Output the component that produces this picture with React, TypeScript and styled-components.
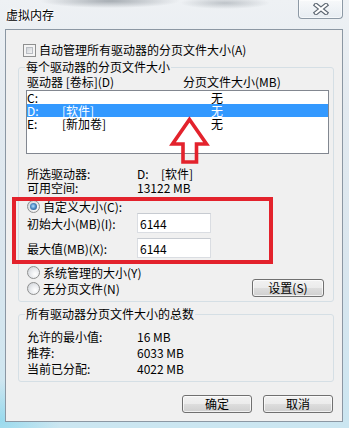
import React from "react";
import styled, { createGlobalStyle } from "styled-components";

const GlobalStyle = createGlobalStyle`
  html, body { margin: 0; padding: 0; }
  body {
    font-family: "Noto Sans CJK SC", "Liberation Sans", sans-serif;
    font-size: 12px;
    color: #000;
  }
  * { box-sizing: border-box; }
`;

const Window = styled.div`
  width: 349px;
  height: 428px;
  display: flex;
  flex-direction: column;
  padding: 0 6px 6px 5px;
  overflow: hidden;
  background:
    radial-gradient(ellipse 70px 7px at 110px 1px, rgba(80, 90, 100, 0.45), transparent),
    radial-gradient(ellipse 45px 6px at 225px 3px, rgba(80, 90, 100, 0.3), transparent),
    radial-gradient(ellipse 60px 40px at 0px 420px, rgba(120, 210, 235, 0.6), transparent),
    linear-gradient(180deg, #eef1f4 0%, #e3eaf0 25%, #dae6ee 60%, #cbe6f1 100%);
`;

const TitleBar = styled.div`
  height: 29px;
  display: flex;
  justify-content: space-between;
  align-items: flex-start;
`;

const Title = styled.div`
  padding: 7px 0 0 1px;
  font-size: 12px;
  line-height: 16px;
  text-shadow: 0 0 5px #fff, 0 0 3px #fff, 0 0 2px #fff;
`;

const CloseButton = styled.div`
  width: 45px;
  height: 19px;
  border: 1px solid #8d99a5;
  border-top: none;
  border-radius: 0 0 4px 4px;
  background: linear-gradient(180deg, rgba(255, 255, 255, 0.55), rgba(225, 233, 240, 0.5));
  box-shadow: inset 0 0 0 1px rgba(255, 255, 255, 0.6);
  display: flex;
  align-items: center;
  justify-content: center;
`;

const Client = styled.div`
  flex: 1;
  position: relative;
  background: #f0f0f0;
  border: 1px solid #8b97a3;
  display: flex;
  flex-direction: column;
`;

const CheckRow = styled.label`
  margin: 13px 0 0 17px;
  height: 14px;
  display: flex;
  align-items: center;
  gap: 3px;
  line-height: 14px;
`;

const CheckBox = styled.span`
  width: 13px;
  height: 13px;
  border: 1px solid #8e8f8f;
  background: #f4f4f4;
  padding: 2px;
  display: inline-flex;
  &::after {
    content: "";
    flex: 1;
    border: 1px solid #b9bdc3;
    background: linear-gradient(135deg, #cfd3d8, #f3f3f3);
  }
`;

const Group = styled.fieldset<{ $top: number }>`
  margin: ${(p) => p.$top}px 8px 0 12px;
  border: 1px solid #d5dfe5;
  border-radius: 3px;
  padding: 0 4px 4px 8px;
  min-width: 0;
`;

const Legend = styled.legend`
  padding: 0 1px;
  margin-left: -2px;
  line-height: 16px;
`;

const HeaderRow = styled.div`
  display: grid;
  grid-template-columns: 156px 1fr;
  height: 14px;
  line-height: 14px;
`;

const ListBox = styled.div`
  margin: 1px 0 0 -1px;
  height: 64px;
  border: 1px solid #828790;
  background: #fff;
  display: flex;
  flex-direction: column;
`;

const ListRow = styled.div<{ $selected?: boolean }>`
  display: grid;
  grid-template-columns: 35px 149px 1fr;
  height: 13px;
  line-height: 13px;
  background: ${(p) => (p.$selected ? "#3399ff" : "transparent")};
  color: ${(p) => (p.$selected ? "#fff" : "#000")};
`;

const InfoGrid = styled.div<{ $top: number; $line: number }>`
  margin-top: ${(p) => p.$top}px;
  display: grid;
  grid-template-columns: 110px 1fr;
  line-height: ${(p) => p.$line}px;
`;

const DriveLetter = styled.span`
  display: inline-block;
  width: 24px;
`;

const RadioRow = styled.label<{ $top: number; $h: number }>`
  margin-top: ${(p) => p.$top}px;
  height: ${(p) => p.$h}px;
  display: flex;
  align-items: center;
  gap: 3px;
`;

const Radio = styled.span<{ $checked?: boolean }>`
  width: 13px;
  height: 13px;
  border-radius: 50%;
  border: 1px solid #8e8f8f;
  background: radial-gradient(circle at 65% 65%, #ffffff 0%, #e9ebee 45%, #c9cdd2 100%);
  display: inline-flex;
  align-items: center;
  justify-content: center;
  &::after {
    content: "";
    width: 7px;
    height: 7px;
    border-radius: 50%;
    display: ${(p) => (p.$checked ? "block" : "none")};
    background: radial-gradient(circle at 45% 45%, #b5e0ff 0%, #4f8cc8 45%, #1d3f6b 100%);
  }
`;

const FieldRow = styled.div<{ $top: number }>`
  margin-top: ${(p) => p.$top}px;
  display: grid;
  grid-template-columns: 110px 74px;
  height: 20px;
  align-items: center;
`;

const TextBox = styled.input`
  width: 74px;
  height: 20px;
  border: 1px solid #dadde2;
  border-top-color: #c7cbd1;
  background: #fff;
  padding: 0 2px;
  font: inherit;
  line-height: 18px;
  color: #000;
  outline: none;
`;

const SplitRow = styled.div`
  height: 18px;
  display: flex;
  justify-content: space-between;
  align-items: center;
`;

const Button = styled.button<{ $w: number; $right?: number }>`
  width: ${(p) => p.$w}px;
  height: 18px;
  margin-right: ${(p) => p.$right ?? 0}px;
  padding: 0;
  border: 1px solid #707070;
  border-radius: 3px;
  background: linear-gradient(180deg, #f2f2f2 0%, #ebebeb 50%, #dddddd 51%, #cfcfcf 100%);
  box-shadow: inset 0 0 0 1px rgba(255, 255, 255, 0.7);
  font: inherit;
  line-height: 16px;
  color: #000;
`;

const ButtonBar = styled.div`
  margin-top: 13px;
  padding-right: 9px;
  display: flex;
  justify-content: flex-end;
  gap: 11px;
`;

const RedBox = styled.div`
  position: absolute;
  left: 6px;
  top: 167px;
  width: 261px;
  height: 67px;
  border: 4px solid #e3222c;
  pointer-events: none;
`;

const RedArrow = styled.svg`
  position: absolute;
  left: 160px;
  top: 84px;
  pointer-events: none;
`;

const drives = [
  { d: "C:", label: "", size: "无", selected: false },
  { d: "D:", label: "[软件]", size: "无", selected: true },
  { d: "E:", label: "[新加卷]", size: "无", selected: false },
];

export default function App() {
  return (
    <>
      <GlobalStyle />
      <Window>
        <TitleBar>
          <Title>虚拟内存</Title>
          <CloseButton>
            <svg width="16" height="12" viewBox="0 0 16 12">
              <path d="M3 2 L13 10 M13 2 L3 10" stroke="#5d6772" strokeWidth="4.4" strokeLinecap="square" />
              <path d="M3 2 L13 10 M13 2 L3 10" stroke="#ffffff" strokeWidth="2.2" strokeLinecap="square" />
            </svg>
          </CloseButton>
        </TitleBar>
        <Client>
          <CheckRow>
            <CheckBox />
            <span>自动管理所有驱动器的分页文件大小(A)</span>
          </CheckRow>

          <Group $top={2}>
            <Legend>每个驱动器的分页文件大小</Legend>
            <HeaderRow>
              <span>驱动器 [卷标](D)</span>
              <span>分页文件大小(MB)</span>
            </HeaderRow>
            <ListBox>
              {drives.map((r) => (
                <ListRow key={r.d} $selected={r.selected}>
                  <span>{r.d}</span>
                  <span>{r.label}</span>
                  <span>{r.size}</span>
                </ListRow>
              ))}
            </ListBox>
            <InfoGrid $top={13} $line={14}>
              <span>所选驱动器:</span>
              <span>
                <DriveLetter>D:</DriveLetter>[软件]
              </span>
              <span>可用空间:</span>
              <span>13122 MB</span>
            </InfoGrid>
            <RadioRow $top={5} $h={13}>
              <Radio $checked />
              <span>自定义大小(C):</span>
            </RadioRow>
            <FieldRow $top={0}>
              <span>初始大小(MB)(I):</span>
              <TextBox defaultValue="6144" readOnly />
            </FieldRow>
            <FieldRow $top={5}>
              <span>最大值(MB)(X):</span>
              <TextBox defaultValue="6144" readOnly />
            </FieldRow>
            <RadioRow $top={7} $h={14}>
              <Radio />
              <span>系统管理的大小(Y)</span>
            </RadioRow>
            <SplitRow>
              <RadioRow $top={0} $h={18}>
                <Radio />
                <span>无分页文件(N)</span>
              </RadioRow>
              <Button $w={72} $right={5}>设置(S)</Button>
            </SplitRow>
          </Group>

          <Group $top={4}>
            <Legend>所有驱动器分页文件大小的总数</Legend>
            <InfoGrid $top={7} $line={16}>
              <span>允许的最小值:</span>
              <span>16 MB</span>
              <span>推荐:</span>
              <span>6033 MB</span>
              <span>当前已分配:</span>
              <span>4022 MB</span>
            </InfoGrid>
          </Group>

          <ButtonBar>
            <Button $w={70}>确定</Button>
            <Button $w={70}>取消</Button>
          </ButtonBar>

          <RedBox />
          <RedArrow width="50" height="54" viewBox="0 0 50 54">
            <path
              d="M23.5 5.5 L40.5 30 L30.5 30 L30.5 48 L17 48 L17 30 L6.5 30 Z"
              fill="none"
              stroke="#e3222c"
              strokeWidth="3.6"
              strokeLinejoin="miter"
            />
          </RedArrow>
        </Client>
      </Window>
    </>
  );
}
